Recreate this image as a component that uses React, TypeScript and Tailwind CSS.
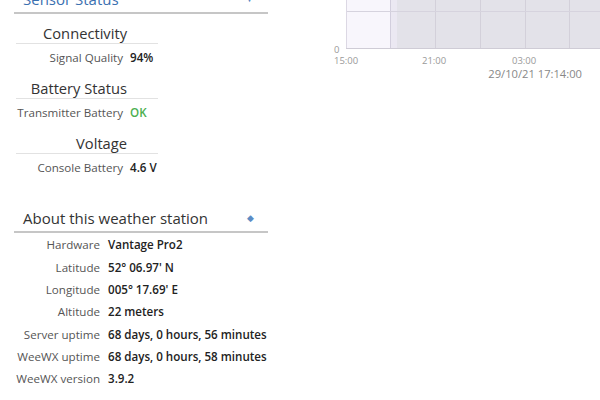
import React from 'react';

const sensorGroups = [
    { title: 'Connectivity', label: 'Signal Quality', value: '94%', ok: false },
    { title: 'Battery Status', label: 'Transmitter Battery', value: 'OK', ok: true },
    { title: 'Voltage', label: 'Console Battery', value: '4.6 V', ok: false },
];

const stationRows = [
    ['Hardware', 'Vantage Pro2'],
    ['Latitude', "52° 06.97' N"],
    ['Longitude', "005° 17.69' E"],
    ['Altitude', '22 meters'],
    ['Server uptime', '68 days, 0 hours, 56 minutes'],
    ['WeeWX uptime', '68 days, 0 hours, 58 minutes'],
    ['WeeWX version', '3.9.2'],
];

function WidgetTitle({ title, blue, toggle }: { title: string; blue?: boolean; toggle: string }) {
    return (
        <div className="flex items-center justify-between pl-[9px] pr-[14px] pb-[3px] border-b-2 border-[#c6c6c6]">
            <span className={`text-[15px] leading-[20px] whitespace-nowrap ${blue ? 'text-[#3b70b0]' : 'text-[#333]'}`}>{title}</span>
            <span className="text-[9px] leading-[20px] text-[#5b8cc4]">{toggle}</span>
        </div>
    );
}

function Chart() {
    const grid = [105, 150, 195, 239];
    return (
        <svg width="270" height="66" className="block">
            <rect x="16" y="0" width="44" height="48" fill="#f8f6fc" />
            <rect x="60" y="0" width="210" height="48" fill="#e3e2e9" />
            <rect x="61" y="0" width="6" height="48" fill="#ebe8f2" />
            <line x1="60.5" y1="0" x2="60.5" y2="48" stroke="#d2cedd" />
            {grid.map((x) => (
                <line key={x} x1={x + 0.5} y1="0" x2={x + 0.5} y2="48" stroke="#d3d0da" />
            ))}
            <line x1="16" y1="11.5" x2="270" y2="11.5" stroke="#d6d3de" />
            <line x1="16.5" y1="0" x2="16.5" y2="48" stroke="#dcd8e4" />
            <line x1="16" y1="48.5" x2="270" y2="48.5" stroke="#cfccd6" />
            <g fill="#9a9a9a" fontSize="9.5" fontFamily="Open Sans, sans-serif">
                <text x="4" y="52.5">0</text>
                <text x="4" y="63.5">15:00</text>
                <text x="92" y="63.5">21:00</text>
                <text x="182" y="63.5">03:00</text>
            </g>
        </svg>
    );
}

export default function App() {
    return (
        <div className="w-[600px] h-[400px] overflow-hidden bg-white flex font-['Open_Sans',sans-serif]">
            {/* left column */}
            <div className="ml-[14px] w-[254px] -mt-[11px] shrink-0">
                <WidgetTitle title="Sensor Status" blue toggle="▼" />
                <div className="ml-[2px] w-[142px] mt-[-1px]">
                    {sensorGroups.map((g, i) => (
                        <div key={g.title} className={i === 0 ? 'mt-[10px]' : 'mt-[8px]'}>
                            <div className="w-[111px] text-right text-[14.7px] leading-[20px] text-[#333] whitespace-nowrap border-b border-[#e2e2e2] pr-[31px] box-content">
                                {g.title}
                            </div>
                            <div className="flex h-[26px] pt-[1px] items-center text-[11.6px] whitespace-nowrap">
                                <span className="w-[111px] shrink-0 text-right pr-[4px] text-[#555]">{g.label}</span>
                                <span className={`pl-[3px] font-semibold ${g.ok ? 'text-[#4caf50]' : 'text-[#222]'}`}>{g.value}</span>
                            </div>
                        </div>
                    ))}
                </div>

                <div className="mt-[28px]">
                    <WidgetTitle title="About this weather station" toggle="◆" />
                    <div className="pt-[1px]">
                        {stationRows.map(([label, value]) => (
                            <div key={label} className="flex h-[22.33px] items-center text-[11.6px] whitespace-nowrap">
                                <span className="w-[88px] shrink-0 text-right pr-[2px] text-[#555]">{label}</span>
                                <span className="pl-[6px] font-semibold text-[#222]">{value}</span>
                            </div>
                        ))}
                    </div>
                </div>
            </div>

            {/* right column: chart */}
            <div className="ml-[62px] w-[270px] shrink-0">
                <Chart />
                <div className="text-right pr-[18px] text-[11.2px] leading-[16px] text-[#888]">
                    29/10/21 17:14:00
                </div>
            </div>
        </div>
    );
}
